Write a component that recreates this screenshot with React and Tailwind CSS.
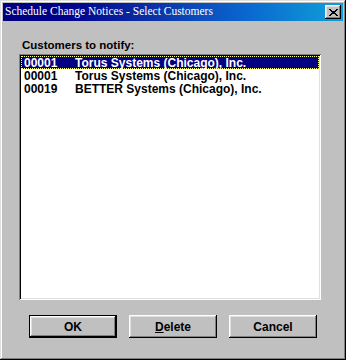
const customers = [
    { code: '00001', name: 'Torus Systems (Chicago), Inc.', selected: true },
    { code: '00001', name: 'Torus Systems (Chicago), Inc.' },
    { code: '00019', name: 'BETTER Systems (Chicago), Inc.' },
]

const raised = 'shadow-[inset_-1px_-1px_#000,inset_1px_1px_#fff,inset_-2px_-2px_#808080,inset_2px_2px_#dfdfdf]'

function Button({ children, isDefault }) {
    const inner = (
        <div className={`flex h-full w-full items-center justify-center bg-[#c0c0c0] text-[12px] font-bold text-black ${raised}`}>
            {children}
        </div>
    )
    if (isDefault) {
        return <div className="h-[23px] w-[88px] border border-black">{inner}</div>
    }
    return <div className="h-[23px] w-[88px]">{inner}</div>
}

export default function App() {
    return (
        <div
            className="flex h-[360px] w-[346px] flex-col bg-[#c0c0c0] p-[3px] shadow-[inset_-1px_-1px_#000,inset_1px_1px_#dfdfdf,inset_-2px_-2px_#808080,inset_2px_2px_#fff]"
            style={{ fontFamily: '"Liberation Sans", Arial, sans-serif' }}
        >
            {/* title bar */}
            <div className="flex h-[18px] items-center justify-between bg-[linear-gradient(to_right,#000080_0%,#00008a_18%,#0a2aa0_40%,#0a68d0_72%,#10a0d8_100%)] pl-[2px] pr-[2px]">
                <span className="text-[11.5px] leading-none text-white" style={{ fontFamily: '"Liberation Serif", "Times New Roman", serif' }}>
                    Schedule Change Notices - Select Customers
                </span>
                <div className={`flex h-[14px] w-[16px] items-center justify-center bg-[#c0c0c0] ${raised}`}>
                    <svg width="9" height="7" viewBox="0 0 9 7" shapeRendering="crispEdges">
                        <path d="M0 0h2v1H0zM7 0h2v1H7zM1 1h2v1H1zM6 1h2v1H6zM2 2h5v1H2zM3 3h3v1H3zM2 4h5v1H2zM1 5h2v1H1zM6 5h2v1H6zM0 6h2v1H0zM7 6h2v1H7z" fill="#000" />
                    </svg>
                </div>
            </div>

            <div className="flex flex-col pl-[16px]">
                <div className="mt-[17px] h-[14px] pl-[3px] text-[11.5px] font-bold leading-[14px] text-black">
                    Customers to notify:
                </div>

                <div className="mt-[2px] h-[246px] w-[302px] bg-white p-[2px] shadow-[inset_1px_1px_#808080,inset_-1px_-1px_#fff,inset_2px_2px_#000,inset_-2px_-2px_#dfdfdf]">
                    {customers.map((c, i) => (
                        <div
                            key={i}
                            className={`flex h-[13px] items-center text-[12px] font-bold leading-none ${c.selected ? 'border border-dotted border-[#ffff80] bg-[#000080] text-white' : 'border border-transparent text-black'}`}
                        >
                            <span className="w-[53px] pl-[2px]">{c.code}</span>
                            <span>{c.name}</span>
                        </div>
                    ))}
                </div>

                <div className="ml-[10px] mt-[15px] flex gap-[12px]">
                    <Button isDefault>OK</Button>
                    <Button>
                        <span><span className="underline">D</span>elete</span>
                    </Button>
                    <Button>Cancel</Button>
                </div>
            </div>
        </div>
    )
}
